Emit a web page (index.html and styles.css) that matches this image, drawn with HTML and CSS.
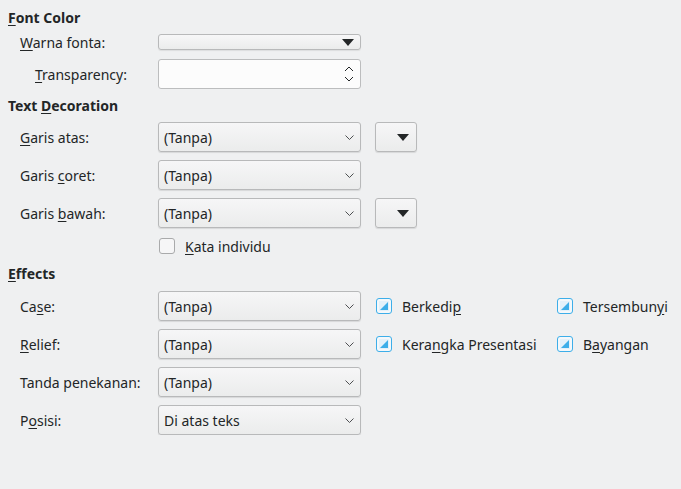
FILE: index.html
```html
<!DOCTYPE html>
<html lang="id">
<head>
    <meta charset="UTF-8">
    <title>Font Effects</title>
    <link rel="stylesheet" href="styles.css">
</head>
<body>

<div class="page">
    <div class="heading"><u>F</u>ont Color</div>

    <div class="row row-color">
        <div class="label"><u>W</u>arna fonta:</div>
        <div class="color-list">
            <svg width="12" height="7" viewBox="0 0 12 7"><path d="M0 0 H12 L6 7 Z" fill="#232627"/></svg>
        </div>
    </div>

    <div class="row row-spin">
        <div class="label label-sub"><u>T</u>ransparency:</div>
        <div class="spin">
            <svg width="10" height="16" viewBox="0 0 10 16">
                <path d="M1 5 L5 1 L9 5" fill="none" stroke="#232627" stroke-width="1"/>
                <path d="M1 11 L5 15 L9 11" fill="none" stroke="#232627" stroke-width="1"/>
            </svg>
        </div>
    </div>

    <div class="heading heading-deco">Text <u>D</u>ecoration</div>

    <div class="row row-combo first">
        <div class="label"><u>G</u>aris atas:</div>
        <div class="combo"><span>(Tanpa)</span><svg class="chev" width="9" height="5" viewBox="0 0 9 5"><path d="M0.5 0.5 L4.5 4.5 L8.5 0.5" fill="none" stroke="#4d4f51"/></svg></div>
        <div class="color-btn"><svg width="12" height="7" viewBox="0 0 12 7"><path d="M0 0 H12 L6 7 Z" fill="#232627"/></svg></div>
    </div>

    <div class="row row-combo">
        <div class="label">Garis <u>c</u>oret:</div>
        <div class="combo"><span>(Tanpa)</span><svg class="chev" width="9" height="5" viewBox="0 0 9 5"><path d="M0.5 0.5 L4.5 4.5 L8.5 0.5" fill="none" stroke="#4d4f51"/></svg></div>
    </div>

    <div class="row row-combo">
        <div class="label">Garis <u>b</u>awah:</div>
        <div class="combo"><span>(Tanpa)</span><svg class="chev" width="9" height="5" viewBox="0 0 9 5"><path d="M0.5 0.5 L4.5 4.5 L8.5 0.5" fill="none" stroke="#4d4f51"/></svg></div>
        <div class="color-btn"><svg width="12" height="7" viewBox="0 0 12 7"><path d="M0 0 H12 L6 7 Z" fill="#232627"/></svg></div>
    </div>

    <div class="row row-check">
        <div class="label"></div>
        <div class="check"></div>
        <div class="check-text"><u>K</u>ata individu</div>
    </div>

    <div class="heading heading-fx"><u>E</u>ffects</div>

    <div class="row row-combo first">
        <div class="label">Ca<u>s</u>e:</div>
        <div class="combo"><span>(Tanpa)</span><svg class="chev" width="9" height="5" viewBox="0 0 9 5"><path d="M0.5 0.5 L4.5 4.5 L8.5 0.5" fill="none" stroke="#4d4f51"/></svg></div>
        <div class="opt opt-first">
            <svg class="tick" width="16" height="16" viewBox="0 0 16 16"><rect x="0.5" y="0.5" width="15" height="15" rx="2.5" fill="#f4f8fb" stroke="#3daee9"/><rect x="3" y="3" width="10" height="10" fill="#e3f1fa"/><path d="M4 12 L12 12 L12 4 Z" fill="#3daee9"/></svg>
            <span>Berkedi<u>p</u></span>
        </div>
        <div class="opt">
            <svg class="tick" width="16" height="16" viewBox="0 0 16 16"><rect x="0.5" y="0.5" width="15" height="15" rx="2.5" fill="#f4f8fb" stroke="#3daee9"/><rect x="3" y="3" width="10" height="10" fill="#e3f1fa"/><path d="M4 12 L12 12 L12 4 Z" fill="#3daee9"/></svg>
            <span>Tersembun<u>y</u>i</span>
        </div>
    </div>

    <div class="row row-combo">
        <div class="label"><u>R</u>elief:</div>
        <div class="combo"><span>(Tanpa)</span><svg class="chev" width="9" height="5" viewBox="0 0 9 5"><path d="M0.5 0.5 L4.5 4.5 L8.5 0.5" fill="none" stroke="#4d4f51"/></svg></div>
        <div class="opt opt-first">
            <svg class="tick" width="16" height="16" viewBox="0 0 16 16"><rect x="0.5" y="0.5" width="15" height="15" rx="2.5" fill="#f4f8fb" stroke="#3daee9"/><rect x="3" y="3" width="10" height="10" fill="#e3f1fa"/><path d="M4 12 L12 12 L12 4 Z" fill="#3daee9"/></svg>
            <span>Kera<u>n</u>gka Presentasi</span>
        </div>
        <div class="opt">
            <svg class="tick" width="16" height="16" viewBox="0 0 16 16"><rect x="0.5" y="0.5" width="15" height="15" rx="2.5" fill="#f4f8fb" stroke="#3daee9"/><rect x="3" y="3" width="10" height="10" fill="#e3f1fa"/><path d="M4 12 L12 12 L12 4 Z" fill="#3daee9"/></svg>
            <span>B<u>a</u>yangan</span>
        </div>
    </div>

    <div class="row row-combo">
        <div class="label">Tanda penekanan:</div>
        <div class="combo"><span>(Tanpa)</span><svg class="chev" width="9" height="5" viewBox="0 0 9 5"><path d="M0.5 0.5 L4.5 4.5 L8.5 0.5" fill="none" stroke="#4d4f51"/></svg></div>
    </div>

    <div class="row row-combo">
        <div class="label">P<u>o</u>sisi:</div>
        <div class="combo"><span>Di atas teks</span><svg class="chev" width="9" height="5" viewBox="0 0 9 5"><path d="M0.5 0.5 L4.5 4.5 L8.5 0.5" fill="none" stroke="#4d4f51"/></svg></div>
    </div>
</div>

</body>
</html>
```

FILE: styles.css
```css
body {
    margin: 0;
    background-color: #eff0f1;
    font-family: "Noto Sans", sans-serif;
    font-size: 14px;
    color: #232627;
}
u {
    text-decoration: underline;
    text-underline-offset: 2px;
}
.page {
    padding: 8px 0 0 8px;
    display: flex;
    flex-direction: column;
}
.heading {
    height: 20px;
    line-height: 20px;
    font-weight: bold;
}
.heading-deco {
    margin-top: 7px;
}
.heading-fx {
    margin-top: 10px;
}
.row {
    display: flex;
    align-items: center;
}
.label {
    width: 138px;
    margin-left: 12px;
    flex-shrink: 0;
    white-space: nowrap;
}
.label-sub {
    width: 123px;
    padding-left: 15px;
}

/* font colour list */
.row-color {
    margin-top: 6px;
    height: 16px;
}
.color-list {
    width: 195px;
    height: 14px;
    border: 1px solid #b8b9ba;
    border-radius: 3px;
    background: linear-gradient(#f7f7f8, #ebecec);
    box-shadow: 0 1px 1px rgba(0, 0, 0, 0.08);
    display: flex;
    align-items: center;
    justify-content: flex-end;
    padding-right: 6px;
}

/* spin field */
.row-spin {
    margin-top: 9px;
    height: 30px;
}
.spin {
    width: 195px;
    height: 28px;
    border: 1px solid #bcbdbe;
    border-radius: 3px;
    background-color: #fcfcfc;
    display: flex;
    align-items: center;
    justify-content: flex-end;
    padding-right: 6px;
}

/* combo boxes */
.row-combo {
    height: 30px;
    margin-top: 8px;
}
.row-combo.first {
    margin-top: 6px;
}
.heading-fx + .row-combo.first {
    margin-top: 7px;
}
.combo {
    width: 190px;
    height: 28px;
    border: 1px solid #b8b9ba;
    border-radius: 3px;
    background: linear-gradient(#f6f6f7, #ebecec);
    box-shadow: 0 1px 1px rgba(0, 0, 0, 0.1);
    display: flex;
    align-items: center;
    justify-content: space-between;
    padding: 0 6px 0 5px;
    flex-shrink: 0;
}
.chev {
    margin-top: 1px;
}
.color-btn {
    width: 42px;
    height: 30px;
    margin-left: 14px;
    border: 1px solid #b8b9ba;
    border-radius: 3px;
    background: linear-gradient(#f6f6f7, #ebecec);
    box-shadow: 0 1px 1px rgba(0, 0, 0, 0.1);
    display: flex;
    align-items: center;
    justify-content: flex-end;
    padding-right: 7px;
    box-sizing: border-box;
}

/* checkboxes */
.row-check {
    margin-top: 10px;
    height: 16px;
}
.check {
    width: 16px;
    height: 16px;
    margin-left: 1px;
    border: 1px solid #a9aaab;
    border-radius: 3px;
    background-color: #f6f6f7;
    box-sizing: border-box;
}
.check-text {
    margin-left: 10px;
}
.opt {
    display: flex;
    align-items: center;
    white-space: nowrap;
}
.opt-first {
    width: 181px;
    margin-left: 15px;
    flex-shrink: 0;
}
.tick {
    margin-right: 10px;
    flex-shrink: 0;
}
```
